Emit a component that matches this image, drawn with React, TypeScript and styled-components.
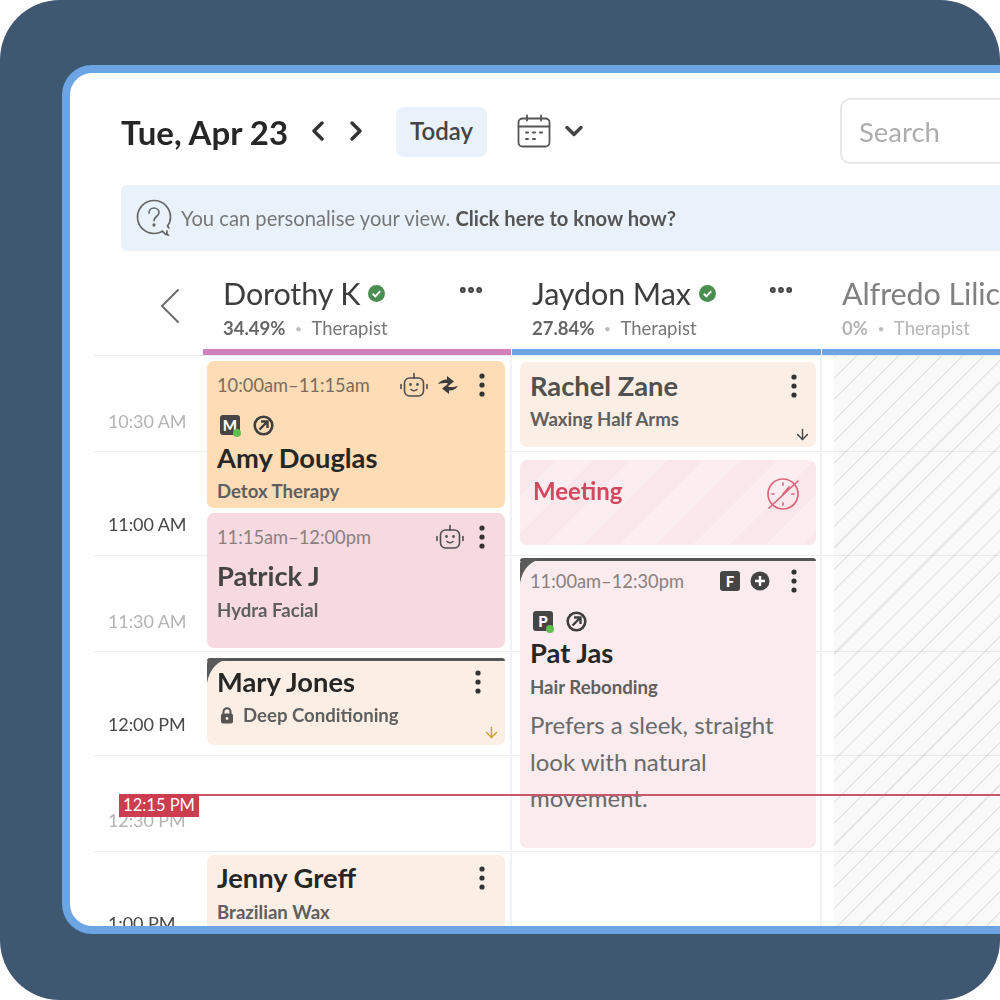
import React from "react";
import styled, { createGlobalStyle } from "styled-components";
import { ChevronLeft, ChevronRight, ChevronDown, ArrowDown, Ellipsis } from "lucide-react";

const Global = createGlobalStyle`
  html, body { margin: 0; padding: 0; background: #fff; }
  * { box-sizing: border-box; }
  body { font-family: "Lato", "Liberation Sans", sans-serif; }
`;

const Frame = styled.div`
  width: 1000px;
  height: 1000px;
  padding: 65px 0 66px 62px;
  background: #3f5872;
  border-radius: 60px;
  overflow: hidden;
`;
const Win = styled.main`
  width: 938px;
  height: 869px;
  background: #fff;
  border: 8px solid #6ca4e4;
  border-right: 0;
  border-radius: 30px 0 0 30px;
  overflow: hidden;
  display: flex;
  flex-direction: column;
  filter: blur(0.4px);
`;
const Toolbar = styled.header`
  flex: none;
  height: 66px;
  margin-top: 25px;
  padding-left: 51px;
  display: flex;
  align-items: center;
`;
const Title = styled.h1`
  flex: none;
  margin: 2px 0 0;
  width: 178px;
  font-size: 33px;
  line-height: 40px;
  font-weight: 700;
  letter-spacing: 0;
  color: #262626;
  white-space: nowrap;
`;
const NavButton = styled.span`
  flex: none;
  width: 38px;
  height: 24px;
  display: flex;
  align-items: center;
  justify-content: center;
  color: #333;
`;
const TodayButton = styled.button`
  flex: none;
  width: 91px;
  height: 50px;
  margin: 2px 0 0 21px;
  padding: 0 0 3px;
  border: 0;
  border-radius: 8px;
  background: #e9f1fa;
  color: #444;
  font: 600 24px "Lato", sans-serif;
`;
const CalendarWrap = styled.span`
  flex: none;
  margin-left: 30px;
  display: flex;
  align-items: center;
  gap: 9px;
  color: #444;
`;
const SearchBox = styled.div`
  margin-left: 252px;
  flex: none;
  width: 300px;
  height: 66px;
  padding-left: 17px;
  border: 2px solid #e8e8e8;
  border-radius: 10px;
  display: flex;
  align-items: center;
  font-size: 27.500px;
  color: #adadad;
`;
const Banner = styled.div`
  flex: none;
  width: 1000px;
  height: 66px;
  margin: 21px 0 0 51px;
  padding-left: 15px;
  border-radius: 6px;
  background: #e9f1fa;
  display: flex;
  align-items: center;
  gap: 9px;
  font-size: 20.200px;
  color: #777;
  white-space: nowrap;
  b { color: #555; font-weight: 700; }
`;
const HeaderRow = styled.div`
  flex: none;
  height: 104px;
  margin-left: 24px;
  display: grid;
  grid-template-columns: 109px 309px 310px 1fr;
`;
const BackCell = styled.div`
  padding: 37px 0 0 65px;
  color: #666;
`;
const Staff = styled.div<{ $bar: string }>`
  padding: 19px 0 0 20px;
  margin-right: 1px;
  border-bottom: 6px solid ${(p) => p.$bar};
  position: relative;
  white-space: nowrap;
`;
const StaffNameRow = styled.div<{ $muted?: boolean }>`
  display: flex;
  align-items: center;
  gap: 8px;
  height: 46px;
  font-size: 30.500px;
  letter-spacing: -0.1px;
  color: ${(p) => (p.$muted ? "#808080" : "#3d3d3d")};
`;
const StaffMeta = styled.div<{ $muted?: boolean }>`
  margin-top: 1px;
  line-height: 22px;
  font-size: 18.500px;
  color: ${(p) => (p.$muted ? "#b5b5b5" : "#777")};
  b { font-weight: 700; color: ${(p) => (p.$muted ? "#b5b5b5" : "#666")}; }
  i { font-style: normal; font-size: 12px; vertical-align: 2px; margin: 0 9.500px; color: #bbb; }
`;
const StaffMore = styled.span`
  position: absolute;
  top: 25px;
  right: 26px;
  color: #444;
  display: flex;
`;
const Calendar = styled.section`
  flex: 1;
  min-height: 0;
  margin-left: 24px;
  position: relative;
  display: grid;
  overflow: hidden;
`;
const RowsLayer = styled.div`
  grid-area: 1 / 1;
  display: flex;
  flex-direction: column;
  border-top: 1px solid #e8e9ec;
`;
const HourRow = styled.div<{ $h: number; $pb: number }>`
  flex: none;
  height: ${(p) => p.$h}px;
  padding: 0 0 ${(p) => p.$pb}px 14px;
  border-bottom: 1px solid #eceef2;
  display: flex;
  align-items: flex-end;
`;
const HourLabel = styled.span<{ $half?: boolean }>`
  line-height: 20px;
  font-size: 18px;
  letter-spacing: -0.1px;
  color: ${(p) => (p.$half ? "#b4b4b4" : "#484848")};
`;
const ColumnsLayer = styled.div`
  grid-area: 1 / 1;
  padding-top: 1px;
  display: grid;
  grid-template-columns: 109px 309px 310px 1fr;
`;
const TimeGutter = styled.div``;
const Column = styled.div<{ $first?: boolean }>`
  display: flex;
  flex-direction: column;
  padding: 0 ${(p) => (p.$first ? "5px 0 4px" : "4px 0 8px")};
  border-right: 2px solid #f0f2f6;
`;
const OffColumn = styled.div`
  margin-left: 12px;
  background-color: rgba(0, 0, 0, 0.022);
  background-image: repeating-linear-gradient(
    135deg,
    rgba(0, 0, 0, 0.075) 0 1.5px,
    transparent 1.5px 15px
  );
`;
const Card = styled.article<{ $bg: string; $h: number; $gap: number; $fold?: boolean; $pt: number }>`
  flex: none;
  position: relative;
  height: ${(p) => p.$h}px;
  margin-top: ${(p) => p.$gap}px;
  padding: ${(p) => p.$pt}px 10px 0 10px;
  border-radius: 7px;
  background: ${(p) => p.$bg};
  ${(p) =>
    p.$fold
      ? `&::before {
          content: "";
          position: absolute;
          top: 0; left: 0; right: 0;
          height: 3px;
          border-radius: 5px 5px 0 0;
          background: #555;
        }
        &::after {
          content: "";
          position: absolute;
          top: 0; left: 0;
          width: 25px; height: 25px;
          background: #5a5a5a;
          border-top-left-radius: 6px;
          clip-path: path("M0 0 H25 Q4 3 0 25 Z");
        }`
      : ""}
`;
const MeetingCard = styled.article`
  flex: none;
  height: 85px;
  margin-top: 13px;
  padding: 16px 15px 0 13px;
  border-radius: 7px;
  display: flex;
  justify-content: space-between;
  align-items: flex-start;
  background-color: #fae7eb;
  background-image: repeating-linear-gradient(
    135deg,
    #f9e7eb 0 26px,
    #fbedf0 26px 52px
  );
`;
const MeetingTitle = styled.h3`
  margin: 0;
  line-height: 30px;
  font-size: 24px;
  font-weight: 700;
  color: #d2485f;
`;
const TopRow = styled.div`
  display: flex;
  align-items: center;
  height: 24px;
`;
const TimeText = styled.span<{ $soft?: boolean }>`
  flex: 1;
  font-size: 18.300px;
  color: ${(p) => (p.$soft ? "#8a7f80" : "#7a6c5e")};
  white-space: nowrap;
`;
const IconSlot = styled.span<{ $mr: number }>`
  display: flex;
  margin-right: ${(p) => p.$mr}px;
`;
const BadgeRow = styled.div<{ $mt: number }>`
  display: flex;
  align-items: center;
  gap: 13px;
  height: 20px;
  margin-top: ${(p) => p.$mt}px;
  padding-left: 3px;
`;
const Badge = styled.span`
  position: relative;
  width: 20px;
  height: 20px;
  border-radius: 3px;
  background: #454545;
  color: #fff;
  font-size: 15px;
  font-weight: 900;
  line-height: 20px;
  text-align: center;
  flex: none;
`;
const BadgeDot = styled.span`
  position: absolute;
  right: -1px;
  bottom: -2px;
  width: 8px;
  height: 8px;
  border-radius: 50%;
  background: #5fc04f;
`;
const NameRow = styled.div<{ $mt: number }>`
  display: flex;
  align-items: center;
  justify-content: space-between;
  margin-top: ${(p) => p.$mt}px;
  position: relative;
  z-index: 1;
`;
const ClientName = styled.h3<{ $tone?: string }>`
  margin: 0;
  line-height: 32px;
  font-size: 27.300px;
  font-weight: 700;
  color: ${(p) => p.$tone || "#262626"};
  white-space: nowrap;
`;
const Service = styled.p<{ $mt: number }>`
  margin: ${(p) => p.$mt}px 0 0;
  display: flex;
  align-items: center;
  gap: 9px;
  line-height: 22px;
  font-size: 18.600px;
  font-weight: 700;
  color: #5f5f5f;
  white-space: nowrap;
`;
const Note = styled.p`
  margin: 9px 0 0;
  line-height: 36.500px;
  font-size: 24px;
  color: #6a6a6a;
`;
const CornerArrow = styled.span<{ $c: string; $right: number; $bottom: number }>`
  position: absolute;
  right: ${(p) => p.$right}px;
  bottom: ${(p) => p.$bottom}px;
  display: flex;
  color: ${(p) => p.$c};
`;
const NowLine = styled.div`
  position: absolute;
  top: 439px;
  left: 25px;
  right: 0;
  height: 2px;
  background: #c9566d;
`;
const NowTag = styled.span`
  position: absolute;
  top: 439px;
  left: 25px;
  width: 80px;
  height: 23px;
  background: #cc3d50;
  color: #fff;
  font-size: 16.500px;
  line-height: 23px;
  text-align: center;
`;

const Kebab = ({ mr = 0 }: { mr?: number }) => (
  <IconSlot $mr={mr}>
    <svg width="8" height="24" viewBox="0 0 8 24" fill="#333">
      <circle cx="4" cy="3" r="2.6" />
      <circle cx="4" cy="12" r="2.6" />
      <circle cx="4" cy="21" r="2.6" />
    </svg>
  </IconSlot>
);
const Bot = () => (
  <svg width="28" height="28" viewBox="0 0 28 28" fill="none" stroke="#4d4d50" strokeWidth="1.6" strokeLinecap="round">
    <rect x="4.500" y="7" width="19" height="18" rx="5" />
    <path d="M14 7V2.500M1 13.500v4M27 13.500v4M11 18.500c1.600 1.600 4.400 1.600 6 0" />
    <circle cx="10.500" cy="13.500" r="0.6" fill="#4d4d50" />
    <circle cx="17.500" cy="13.500" r="0.6" fill="#4d4d50" />
  </svg>
);
const Swap = () => (
  <svg width="24" height="24" viewBox="0 0 24 24" fill="#3c3c3c">
    <path d="M2 11c2-3 5-4.500 9-4.500V3l7 5.500-6.500 5v-3.500C8 10 5 10 2 11z" />
    <path d="M22 13c-2 3-5 4.500-9 4.500V21l-7-5.500 6.500-5v3.500c3.500 0 6.500 0 9.500-1z" />
  </svg>
);
const CircleArrow = () => (
  <svg width="21" height="21" viewBox="0 0 21 21" fill="none" stroke="#3f3f3f" strokeWidth="2.6">
    <circle cx="10.500" cy="10.500" r="8.800" />
    <path d="M6.500 14.500 14 7M8 6.500h6.500V13" strokeWidth="2.400" />
  </svg>
);
const PlusCircle = () => (
  <svg width="20" height="20" viewBox="0 0 20 20">
    <circle cx="10" cy="10" r="9.500" fill="#444" />
    <path d="M10 5v10M5 10h10" stroke="#fff" strokeWidth="2.400" />
  </svg>
);
const Lock = () => (
  <svg width="14" height="17" viewBox="0 0 14 17" style={{ marginLeft: 3 }}>
    <path d="M3.500 7V4.800a3.500 3.500 0 0 1 7 0V7" fill="none" stroke="#555" strokeWidth="2" />
    <rect x="1" y="6.500" width="12" height="10" rx="2" fill="#555" />
    <circle cx="7" cy="11.500" r="1.400" fill="#fbeee4" />
  </svg>
);
const ClockOff = () => (
  <svg width="36" height="36" viewBox="0 0 36 36" fill="none" stroke="#d8677c" strokeWidth="1.700" strokeLinecap="round">
    <circle cx="18" cy="18" r="15" />
    <path d="M4 32 33 5M18 7v2M18 27v2M7 18h2M27 18h2M18 18l6-7" />
  </svg>
);
const Verified = () => (
  <svg width="17" height="17" viewBox="0 0 18 18">
    <circle cx="9" cy="9" r="9" fill="#4a8f4f" />
    <path d="M5 9.300 7.800 12 13 6.500" fill="none" stroke="#fff" strokeWidth="2" />
  </svg>
);
const CalendarIcon = () => (
  <svg width="34" height="34" viewBox="0 0 34 34" fill="none" stroke="#555" strokeWidth="1.800" strokeLinecap="round">
    <rect x="1.500" y="4.500" width="31" height="28" rx="4" />
    <path d="M1.500 12.500h31M10 1.500v5M24 1.500v5" />
    <path d="M9 18.500h2M16 18.500h2M23 18.500h2M9 25h2M16 25h2" strokeWidth="2" />
  </svg>
);
const HelpBubble = () => (
  <svg width="36" height="38" viewBox="0 0 36 38" fill="none" stroke="#666" strokeWidth="1.700" strokeLinecap="round">
    <path d="M33 29c-1-1-1.500-2-1.500-2 2-2.600 3-5.500 3-9A16.500 16.500 0 1 0 18 34.500c3 0 6-.8 8.500-2.300 1.500 2 3 3.500 5.500 3.800-1-1.500-1.500-3-1-4" />
    <path d="M13 14c0-3 2.300-5 5-5s5 2 5 4.500c0 4-5 4-5 8" />
    <circle cx="18" cy="26" r="0.800" fill="#666" />
  </svg>
);
const BackArrow = () => (
  <svg width="22" height="36" viewBox="0 0 22 36" fill="none" stroke="currentColor" strokeWidth="1.800" strokeLinecap="round">
    <path d="M19 2 3 18l16 16" />
  </svg>
);

export default function App() {
  return (
    <>
      <Global />
      <Frame>
        <Win>
          <Toolbar>
            <Title>Tue, Apr 23</Title>
            <NavButton><ChevronLeft size={32} strokeWidth={2.6} /></NavButton>
            <NavButton><ChevronRight size={32} strokeWidth={2.6} /></NavButton>
            <TodayButton>Today</TodayButton>
            <CalendarWrap>
              <CalendarIcon />
              <ChevronDown size={28} strokeWidth={3} />
            </CalendarWrap>
            <SearchBox>Search</SearchBox>
          </Toolbar>
          <Banner>
            <HelpBubble />
            <span>
              You can personalise your view. <b>Click here to know how?</b>
            </span>
          </Banner>
          <HeaderRow>
            <BackCell>
              <BackArrow />
            </BackCell>
            <Staff $bar="#d27fbe">
              <StaffNameRow>Dorothy K <Verified /></StaffNameRow>
              <StaffMeta><b>34.49%</b><i>•</i>Therapist</StaffMeta>
              <StaffMore><Ellipsis size={28} strokeWidth={3} /></StaffMore>
            </Staff>
            <Staff $bar="#6ca4e4">
              <StaffNameRow>Jaydon Max <Verified /></StaffNameRow>
              <StaffMeta><b>27.84%</b><i>•</i>Therapist</StaffMeta>
              <StaffMore><Ellipsis size={28} strokeWidth={3} /></StaffMore>
            </Staff>
            <Staff $bar="#6ca4e4">
              <StaffNameRow $muted>Alfredo Lilic</StaffNameRow>
              <StaffMeta $muted><b>0%</b><i>•</i>Therapist</StaffMeta>
            </Staff>
          </HeaderRow>
          <Calendar>
            <RowsLayer>
              <HourRow $h={96} $pb={20}><HourLabel $half>10:30 AM</HourLabel></HourRow>
              <HourRow $h={104} $pb={21}><HourLabel>11:00 AM</HourLabel></HourRow>
              <HourRow $h={96} $pb={20}><HourLabel $half>11:30 AM</HourLabel></HourRow>
              <HourRow $h={104} $pb={21}><HourLabel>12:00 PM</HourLabel></HourRow>
              <HourRow $h={96} $pb={21}><HourLabel $half>12:30 PM</HourLabel></HourRow>
              <HourRow $h={104} $pb={22}><HourLabel>1:00 PM</HourLabel></HourRow>
            </RowsLayer>
            <ColumnsLayer>
              <TimeGutter />
              <Column $first>
                <Card $bg="#fddcb6" $h={147} $gap={5} $pt={12}>
                  <TopRow>
                    <TimeText>10:00am–11:15am</TimeText>
                    <IconSlot $mr={8}><Bot /></IconSlot>
                    <IconSlot $mr={18}><Swap /></IconSlot>
                    <Kebab mr={9} />
                  </TopRow>
                  <BadgeRow $mt={18}>
                    <Badge>M<BadgeDot /></Badge>
                    <CircleArrow />
                  </BadgeRow>
                  <NameRow $mt={7}><ClientName>Amy Douglas</ClientName></NameRow>
                  <Service $mt={6}>Detox Therapy</Service>
                </Card>
                <Card $bg="#f6dae0" $h={135} $gap={5} $pt={12}>
                  <TopRow>
                    <TimeText $soft>11:15am–12:00pm</TimeText>
                    <IconSlot $mr={14}><Bot /></IconSlot>
                    <Kebab mr={9} />
                  </TopRow>
                  <NameRow $mt={11}><ClientName $tone="#444">Patrick J</ClientName></NameRow>
                  <Service $mt={7}>Hydra Facial</Service>
                </Card>
                <Card $bg="#fbeee4" $h={87} $gap={10} $pt={8} $fold>
                  <NameRow $mt={0}>
                    <ClientName>Mary Jones</ClientName>
                    <Kebab mr={13} />
                  </NameRow>
                  <Service $mt={6}><Lock />Deep Conditioning</Service>
                  <CornerArrow $c="#c9a227" $right={5} $bottom={4}><ArrowDown size={17} strokeWidth={2} /></CornerArrow>
                </Card>
                <Card $bg="#fbeee4" $h={110} $gap={110} $pt={7}>
                  <NameRow $mt={0}>
                    <ClientName>Jenny Greff</ClientName>
                    <Kebab mr={9} />
                  </NameRow>
                  <Service $mt={7}>Brazilian Wax</Service>
                </Card>
              </Column>
              <Column>
                <Card $bg="#fbeee4" $h={85} $gap={6} $pt={8}>
                  <NameRow $mt={0}>
                    <ClientName $tone="#505050">Rachel Zane</ClientName>
                    <Kebab mr={8} />
                  </NameRow>
                  <Service $mt={6}>Waxing Half Arms</Service>
                  <CornerArrow $c="#444" $right={5} $bottom={4}><ArrowDown size={17} strokeWidth={2} /></CornerArrow>
                </Card>
                <MeetingCard>
                  <MeetingTitle>Meeting</MeetingTitle>
                  <ClockOff />
                </MeetingCard>
                <Card $bg="#faebee" $h={290} $gap={13} $pt={11} $fold>
                  <TopRow>
                    <TimeText $soft>11:00am–12:30pm</TimeText>
                    <IconSlot $mr={10}><Badge>F</Badge></IconSlot>
                    <IconSlot $mr={20}><PlusCircle /></IconSlot>
                    <Kebab mr={8} />
                  </TopRow>
                  <BadgeRow $mt={18}>
                    <Badge>P<BadgeDot /></Badge>
                    <CircleArrow />
                  </BadgeRow>
                  <NameRow $mt={6}><ClientName>Pat Jas</ClientName></NameRow>
                  <Service $mt={7}>Hair Rebonding</Service>
                  <Note>Prefers a sleek, straight look with natural movement.</Note>
                </Card>
              </Column>
              <OffColumn />
            </ColumnsLayer>
            <NowLine />
            <NowTag>12:15 PM</NowTag>
          </Calendar>
        </Win>
      </Frame>
    </>
  );
}
